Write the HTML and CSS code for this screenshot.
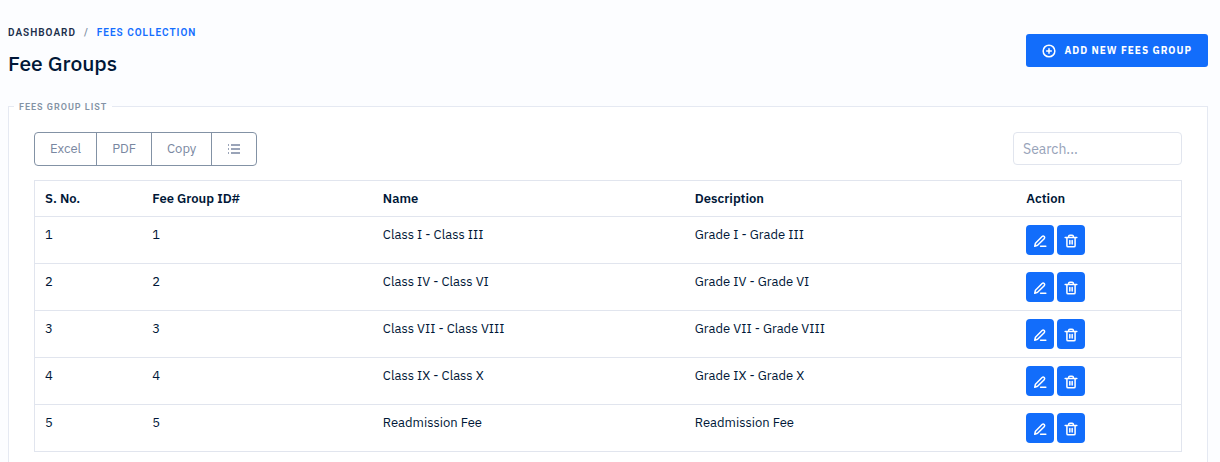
FILE: index.html
```
<!DOCTYPE html>
<html lang="en">
<head>
    <meta charset="UTF-8">
    <meta name="viewport" content="width=device-width, initial-scale=1.0">
    <title>Fee Groups</title>
    <link rel="stylesheet" href="styles.css">
</head>
<body>
    <!-- Shared icons -->
    <svg class="icon-defs" aria-hidden="true">
        <symbol id="icon-edit" viewBox="0 0 24 24">
            <path d="M3 21l1.2-5.2L15.6 4.4a2.4 2.4 0 0 1 3.6 3.6L7.8 19.4z"/>
            <path d="M13 21h9"/>
        </symbol>
        <symbol id="icon-trash" viewBox="0 0 24 24">
            <path d="M2 6h20M5 6v14a2 2 0 0 0 2 2h10a2 2 0 0 0 2-2V6M8 6V4a2 2 0 0 1 2-2h4a2 2 0 0 1 2 2v2M10 11v6M14 11v6"/>
        </symbol>
    </svg>

    <div class="container">
        <header class="page-header">
            <div>
                <nav class="breadcrumb" aria-label="Breadcrumb">
                    <a href="#">Dashboard</a>
                    <span class="separator">/</span>
                    <a href="#" class="active">Fees Collection</a>
                </nav>
                <h1>Fee Groups</h1>
            </div>
            <button type="button" class="add-btn">
                <svg class="icon" viewBox="0 0 24 24"><circle cx="12" cy="12" r="10"/><path d="M12 8v8M8 12h8"/></svg>
                Add New Fees Group
            </button>
        </header>

        <fieldset class="list-box">
            <legend>Fees Group List</legend>

            <div class="toolbar">
                <div class="btn-group">
                    <button type="button">Excel</button>
                    <button type="button">PDF</button>
                    <button type="button">Copy</button>
                    <button type="button" aria-label="Columns">
                        <svg class="icon-list" viewBox="0 0 14 12"><path d="M4 2h9M4 6h9M4 10h9M1 2h1M1 6h1M1 10h1"/></svg>
                    </button>
                </div>
                <input type="search" class="search" placeholder="Search..." aria-label="Search">
            </div>

            <table>
                <thead>
                    <tr>
                        <th class="col-no">S. No.</th>
                        <th class="col-id">Fee Group ID#</th>
                        <th class="col-name">Name</th>
                        <th class="col-desc">Description</th>
                        <th>Action</th>
                    </tr>
                </thead>
                <tbody>
                    <tr>
                        <td>1</td>
                        <td>1</td>
                        <td>Class I - Class III</td>
                        <td>Grade I - Grade III</td>
                        <td>
                            <div class="actions">
                                <button type="button" aria-label="Edit"><svg class="icon"><use href="#icon-edit"/></svg></button>
                                <button type="button" aria-label="Delete"><svg class="icon"><use href="#icon-trash"/></svg></button>
                            </div>
                        </td>
                    </tr>
                    <tr>
                        <td>2</td>
                        <td>2</td>
                        <td>Class IV - Class VI</td>
                        <td>Grade IV - Grade VI</td>
                        <td>
                            <div class="actions">
                                <button type="button" aria-label="Edit"><svg class="icon"><use href="#icon-edit"/></svg></button>
                                <button type="button" aria-label="Delete"><svg class="icon"><use href="#icon-trash"/></svg></button>
                            </div>
                        </td>
                    </tr>
                    <tr>
                        <td>3</td>
                        <td>3</td>
                        <td>Class VII - Class VIII</td>
                        <td>Grade VII - Grade VIII</td>
                        <td>
                            <div class="actions">
                                <button type="button" aria-label="Edit"><svg class="icon"><use href="#icon-edit"/></svg></button>
                                <button type="button" aria-label="Delete"><svg class="icon"><use href="#icon-trash"/></svg></button>
                            </div>
                        </td>
                    </tr>
                    <tr>
                        <td>4</td>
                        <td>4</td>
                        <td>Class IX - Class X</td>
                        <td>Grade IX - Grade X</td>
                        <td>
                            <div class="actions">
                                <button type="button" aria-label="Edit"><svg class="icon"><use href="#icon-edit"/></svg></button>
                                <button type="button" aria-label="Delete"><svg class="icon"><use href="#icon-trash"/></svg></button>
                            </div>
                        </td>
                    </tr>
                    <tr>
                        <td>5</td>
                        <td>5</td>
                        <td>Readmission Fee</td>
                        <td>Readmission Fee</td>
                        <td>
                            <div class="actions">
                                <button type="button" aria-label="Edit"><svg class="icon"><use href="#icon-edit"/></svg></button>
                                <button type="button" aria-label="Delete"><svg class="icon"><use href="#icon-trash"/></svg></button>
                            </div>
                        </td>
                    </tr>
                </tbody>
            </table>
        </fieldset>
    </div>
</body>
</html>
```

FILE: styles.css
```
* {
    box-sizing: border-box;
}

body {
    margin: 0;
    background: #fcfdff;
    color: #001737;
    font-family: "IBM Plex Sans", Roboto, sans-serif;
    font-size: 13px;
    line-height: 20px;
}

button, input {
    font-family: inherit;
    font-size: 13px;
}

button {
    cursor: pointer;
}

.container {
    padding: 25px 12px 0 8px;
}

.icon-defs {
    display: none;
}

.icon {
    width: 14px;
    height: 14px;
    fill: none;
    stroke: currentColor;
    stroke-width: 2.6;
    stroke-linecap: round;
    stroke-linejoin: round;
}

/* Header */
.page-header {
    display: flex;
    justify-content: space-between;
    align-items: center;
    margin-bottom: 24px;
}

.breadcrumb {
    display: flex;
    gap: 8px;
    font-family: Roboto, sans-serif;
    font-size: 10px;
    font-weight: 600;
    line-height: 16px;
    letter-spacing: 1px;
    text-transform: uppercase;
}

.breadcrumb a {
    color: #1b2e4b;
    text-decoration: none;
}

.breadcrumb .active {
    color: #146eff;
}

.separator {
    color: #8392a5;
}

h1 {
    margin: 9px 0 0;
    font-size: 21px;
    font-weight: 500;
    line-height: 26px;
}

.add-btn {
    display: flex;
    align-items: center;
    gap: 8px;
    padding: 8px 16px;
    background: #126dfb;
    color: white;
    border: none;
    border-radius: 3px;
    font-size: 10px;
    font-weight: 700;
    line-height: 17px;
    letter-spacing: 1px;
    text-transform: uppercase;
}

/* List */
.list-box {
    min-width: 0;
    margin: 0;
    padding: 19px 25px 25px;
    background: white;
    border: 1px solid #e5e9f2;
}

legend {
    margin-left: -20px;
    padding: 1px 5px 0;
    color: #8392a5;
    font-family: Roboto, sans-serif;
    font-size: 9px;
    font-weight: 600;
    line-height: 12px;
    letter-spacing: 1px;
    text-transform: uppercase;
}

.toolbar {
    display: flex;
    justify-content: space-between;
    align-items: flex-start;
    margin-bottom: 14px;
}

.btn-group {
    display: flex;
    border: 1px solid #8392a5;
    border-radius: 4px;
}

.btn-group button {
    display: flex;
    align-items: center;
    padding: 6px 15px;
    background: none;
    color: #7987a1;
    border: none;
    border-right: 1px solid #8392a5;
    line-height: 20px;
}

.btn-group button:last-child {
    border-right: none;
}

.icon-list {
    width: 14px;
    height: 12px;
    fill: none;
    stroke: currentColor;
    stroke-width: 1.5;
}

.search {
    width: 169px;
    height: 33px;
    padding: 0 9px;
    background: white;
    color: #001737;
    border: 1px solid #e1e5ee;
    border-radius: 4px;
    font-size: 14px;
}

.search::placeholder {
    color: #97a3b9;
}

table {
    width: 100%;
    table-layout: fixed;
    border-collapse: collapse;
    border: 1px solid #e1e5ee;
}

th, td {
    padding: 8px 10px;
    text-align: left;
    vertical-align: top;
    border-bottom: 1px solid #e1e5ee;
}

th {
    padding: 8px 10px 7px;
    font-weight: 600;
}

.col-no {
    width: 9.4%;
}

.col-id {
    width: 20.1%;
}

.col-name {
    width: 27.2%;
}

.col-desc {
    width: 28.9%;
}

.actions {
    display: flex;
    gap: 3px;
}

.actions button {
    display: flex;
    align-items: center;
    justify-content: center;
    width: 28px;
    height: 30px;
    padding: 2px 0 0;
    background: #126dfb;
    color: white;
    border: none;
    border-radius: 4px;
}
```
